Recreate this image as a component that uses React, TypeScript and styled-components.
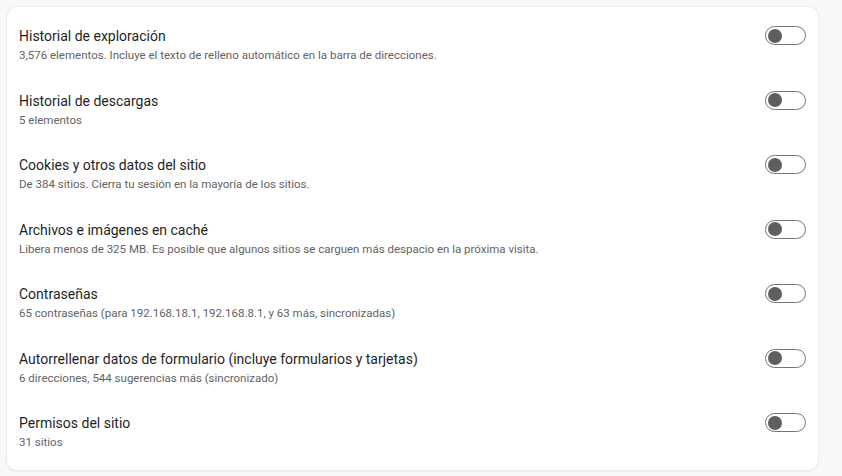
import * as React from 'react';
import styled, { createGlobalStyle } from 'styled-components';

interface IItem {
  title: string;
  detail: string;
}

const items: IItem[] = [
  {
    title: 'Historial de exploración',
    detail: '3,576 elementos. Incluye el texto de relleno automático en la barra de direcciones.',
  },
  { title: 'Historial de descargas', detail: '5 elementos' },
  {
    title: 'Cookies y otros datos del sitio',
    detail: 'De 384 sitios. Cierra tu sesión en la mayoría de los sitios.',
  },
  {
    title: 'Archivos e imágenes en caché',
    detail: 'Libera menos de 325 MB. Es posible que algunos sitios se carguen más despacio en la próxima visita.',
  },
  {
    title: 'Contraseñas',
    detail: '65 contraseñas (para 192.168.18.1, 192.168.8.1, y 63 más, sincronizadas)',
  },
  {
    title: 'Autorrellenar datos de formulario (incluye formularios y tarjetas)',
    detail: '6 direcciones, 544 sugerencias más (sincronizado)',
  },
  { title: 'Permisos del sitio', detail: '31 sitios' },
];

const App: React.FunctionComponent = () => {
  const [checked, setChecked] = React.useState<boolean[]>(items.map(() => false));

  const toggle = (index: number) => {
    setChecked((prev) => prev.map((v, i) => (i === index ? !v : v)));
  };

  return (
    <>
      <GlobalStyle />
      <StyledPage>
        <StyledCard>
          {items.map((item, index) => (
            <StyledRow key={item.title}>
              <StyledText>
                <StyledTitle>{item.title}</StyledTitle>
                <StyledDetail>{item.detail}</StyledDetail>
              </StyledText>
              <StyledSwitch
                type="button"
                role="switch"
                aria-checked={checked[index]}
                $on={checked[index]}
                onClick={() => toggle(index)}
              >
                <StyledKnob $on={checked[index]} />
              </StyledSwitch>
            </StyledRow>
          ))}
        </StyledCard>
      </StyledPage>
    </>
  );
};

const GlobalStyle = createGlobalStyle`
  html, body {
    margin: 0;
    padding: 0;
    background: #f8f8f8;
    font-family: Roboto, "Noto Sans", sans-serif;
  }
`;

const StyledPage = styled.div`
  width: 842px;
  height: 476px;
  padding: 7px 0 0 7px;
  box-sizing: border-box;
`;

const StyledCard = styled.div`
  width: 811px;
  height: 463px;
  box-sizing: border-box;
  background: #ffffff;
  border-radius: 10px;
  box-shadow: 0 0 0 1px #ececec, 0 1px 2px rgba(0, 0, 0, 0.12);
  padding: 20px 12px 0 12px;
  display: flex;
  flex-direction: column;
`;

const StyledRow = styled.div`
  flex: 0 0 64.5px;
  display: flex;
  align-items: flex-start;
  justify-content: space-between;
`;

const StyledText = styled.div`
  display: flex;
  flex-direction: column;
  gap: 1px;
`;

const StyledTitle = styled.div`
  font-size: 14px;
  line-height: 19px;
  color: #1f1f1f;
`;

const StyledDetail = styled.div`
  font-size: 11.5px;
  line-height: 17px;
  color: #636363;
`;

const StyledSwitch = styled.button<{ $on: boolean }>`
  margin-top: -1px;
  margin-right: 0;
  width: 41px;
  height: 19px;
  padding: 0 2px;
  box-sizing: border-box;
  border: 1px solid ${(p) => (p.$on ? '#0b57d0' : '#757575')};
  border-radius: 10px;
  background: ${(p) => (p.$on ? '#0b57d0' : '#ffffff')};
  display: flex;
  align-items: center;
  justify-content: ${(p) => (p.$on ? 'flex-end' : 'flex-start')};
  cursor: pointer;
`;

const StyledKnob = styled.span<{ $on: boolean }>`
  width: 14px;
  height: 14px;
  border-radius: 50%;
  background: ${(p) => (p.$on ? '#ffffff' : '#5f5f5f')};
`;

export default App;
